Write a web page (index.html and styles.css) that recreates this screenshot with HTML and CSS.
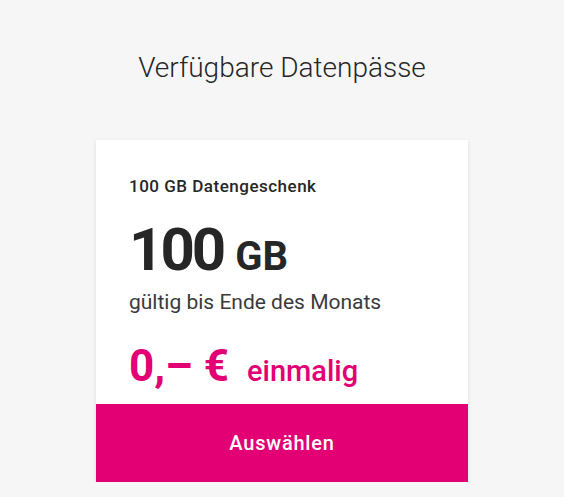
FILE: index.html
```html
<!DOCTYPE html>
<html lang="de">
<head>
<meta charset="utf-8">
<title>Verfügbare Datenpässe</title>
<link rel="stylesheet" href="styles.css">
</head>
<body>
<main class="page">
  <h1 class="page-title">Verfügbare Datenpässe</h1>
  <section class="card">
    <div class="card-body">
      <h2 class="card-title">100 GB Datengeschenk</h2>
      <div class="volume"><span class="volume-num">100</span><span class="volume-unit">GB</span></div>
      <p class="validity">gültig bis Ende des Monats</p>
      <div class="price"><span class="price-amount">0,– €</span><span class="price-note">einmalig</span></div>
    </div>
    <button class="select-btn" type="button">Auswählen</button>
  </section>
</main>
</body>
</html>
```

FILE: styles.css
```css
html, body {
  margin: 0;
  padding: 0;
  background: #f6f6f6;
}
body {
  font-family: Roboto, "Liberation Sans", Arial, sans-serif;
  color: #262626;
}
.page {
  display: flex;
  flex-direction: column;
  align-items: center;
  padding-top: 52px;
}
.page-title {
  margin: 0;
  font-size: 28px;
  font-weight: 300;
  line-height: 32px;
  color: #262626;
}
.card {
  margin-top: 56px;
  width: 372px;
  background: #fff;
  box-shadow: 0 1px 4px rgba(0,0,0,0.10);
  display: flex;
  flex-direction: column;
}
.card-body {
  padding: 36px 33px 11px 33px;
}
.card-title {
  margin: 0;
  font-size: 17px;
  font-weight: 500;
  letter-spacing: 0.5px;
  line-height: 20px;
}
.volume {
  margin-top: 28px;
  display: flex;
  align-items: baseline;
  line-height: 52px;
  font-weight: 700;
}
.volume-num {
  font-size: 60px;
  letter-spacing: -3px;
}
.volume-unit {
  font-size: 40px;
  margin-left: 12px;
}
.validity {
  margin: 7px 0 0 0;
  font-size: 21px;
  font-weight: 400;
  line-height: 24px;
  color: #3a3a3a;
}
.price {
  margin-top: 30px;
  display: flex;
  align-items: baseline;
  color: #e20074;
  line-height: 44px;
}
.price-amount {
  font-size: 44px;
  font-weight: 700;
}
.price-note {
  font-size: 29px;
  font-weight: 500;
  margin-left: 18px;
}
.select-btn {
  border: 0;
  margin: 0;
  height: 78px;
  background: #e20074;
  color: #fff;
  font-family: Roboto, "Liberation Sans", Arial, sans-serif;
  font-size: 20px;
  font-weight: 500;
  letter-spacing: 0.8px;
  cursor: pointer;
}
```
